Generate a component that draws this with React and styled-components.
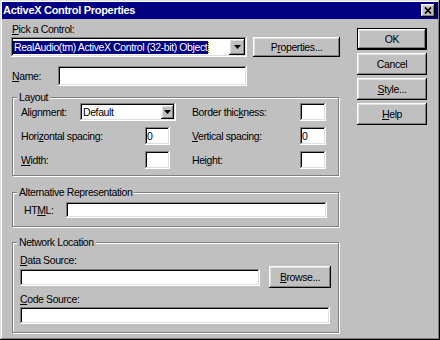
import React from 'react';
import styled, { createGlobalStyle } from 'styled-components';

const GlobalStyle = createGlobalStyle`
  html, body { margin: 0; padding: 0; background: #c0c0c0; }
  body { font-family: "Liberation Sans", Arial, sans-serif; }
  * { box-sizing: border-box; }
`;

const raised = `box-shadow: inset -1px -1px #000, inset 1px 1px #fff, inset -2px -2px #808080, inset 2px 2px #dfdfdf;`;
const sunken = `box-shadow: inset -1px -1px #fff, inset 1px 1px #808080, inset -2px -2px #dfdfdf, inset 2px 2px #000;`;

const Window = styled.div`
  width: 440px;
  height: 340px;
  padding: 2px;
  background: #c0c0c0;
  box-shadow: inset -1px -1px #000, inset 1px 1px #dfdfdf, inset -2px -2px #808080, inset 2px 2px #fff;
  display: flex;
  flex-direction: column;
  font-size: 10.5px;
  letter-spacing: -0.4px;
  color: #000;
`;

const TitleBar = styled.div`
  height: 17px;
  background: #000080;
  color: #fff;
  display: flex;
  align-items: center;
  justify-content: space-between;
  padding: 0 3px 0 1px;
`;

const Title = styled.span`
  font-weight: bold;
  font-size: 11px;
  letter-spacing: -0.3px;
  line-height: 17px;
  white-space: nowrap;
`;

const CloseButton = styled.button`
  width: 14px;
  height: 13px;
  padding: 0;
  border: 0;
  background: #c0c0c0;
  ${raised}
  display: flex;
  align-items: center;
  justify-content: center;
`;

const Body = styled.div`
  flex: 1;
  display: flex;
  gap: 17px;
  padding-left: 9px;
`;

const Main = styled.div`
  width: 329px;
  display: flex;
  flex-direction: column;
  padding-top: 4px;
`;

const Side = styled.div`
  width: 70px;
  display: flex;
  flex-direction: column;
  gap: 3px;
  padding-top: 9px;
`;

const Label = styled.div`
  line-height: ${p => p.$lh || 13}px;
  padding-left: ${p => p.$indent ?? 1}px;
  margin-top: ${p => p.$mt || 0}px;
  white-space: nowrap;
`;

const Row = styled.div`
  display: flex;
  align-items: center;
  justify-content: ${p => p.$spread ? 'space-between' : 'flex-start'};
  height: ${p => p.$h}px;
  margin-top: ${p => p.$mt || 0}px;
`;

const FieldLabel = styled.span`
  width: ${p => p.$w}px;
  flex: none;
  white-space: nowrap;
  padding-left: ${p => p.$indent || 0}px;
`;

const Field = styled.div`
  display: flex;
  align-items: center;
  width: ${p => (p.$w ? `${p.$w}px` : 'auto')};
  flex: none;
`;

const TextBox = styled.input`
  width: ${p => p.$w}px;
  height: ${p => p.$h}px;
  margin: ${p => p.$mt || 0}px 0 0 0;
  border: 0;
  outline: none;
  padding: 0 2px;
  background: #fff;
  ${sunken}
  font: inherit;
  letter-spacing: inherit;
  color: #000;
  display: block;
`;

const Combo = styled.div`
  width: ${p => p.$w}px;
  height: ${p => p.$h}px;
  background: #fff;
  ${sunken}
  padding: 2px;
  display: flex;
  align-items: center;
`;

const ComboValue = styled.div`
  flex: 1;
  display: flex;
  align-items: center;
  padding-left: ${p => (p.$selected ? 0 : 1)}px;
  white-space: nowrap;
  overflow: hidden;
`;

const Selected = styled.span`
  background: #000080;
  color: #fff;
  line-height: 13px;
  padding: 0 1px;
  outline: 1px dotted #808000;
`;

const DropButton = styled.div`
  width: ${p => p.$w}px;
  align-self: stretch;
  flex: none;
  background: #c0c0c0;
  ${raised}
  display: flex;
  align-items: center;
  justify-content: center;
`;

const Button = styled.button`
  width: ${p => p.$w}px;
  height: ${p => p.$h || 22}px;
  padding: 0;
  border: ${p => (p.$default ? '1px solid #000' : '0')};
  background: #c0c0c0;
  ${raised}
  font: inherit;
  letter-spacing: inherit;
  color: #000;
  flex: none;
`;

const Group = styled.div`
  position: relative;
  width: 327px;
  margin: ${p => p.$mt}px 0 0 1px;
  border: 1px solid #808080;
  box-shadow: inset 1px 1px #fff, 1px 1px #fff;
  padding: ${p => p.$pad};
  display: flex;
  flex-direction: column;
  gap: ${p => p.$gap || 0}px;
`;

const Legend = styled.span`
  position: absolute;
  top: -7px;
  left: 4px;
  padding: 0 2px;
  background: #c0c0c0;
  line-height: 12px;
  white-space: nowrap;
`;

const Key = styled.u`
  text-decoration: underline;
  text-underline-offset: 1px;
`;

const Arrow = () => (
  <svg width="7" height="4" viewBox="0 0 7 4">
    <polygon points="0,0 7,0 3.5,4" fill="#000" />
  </svg>
);

const CloseIcon = () => (
  <svg width="8" height="7" viewBox="0 0 8 7">
    <path d="M1 0.5 L7 6.5 M7 0.5 L1 6.5" stroke="#000" strokeWidth="1.7" fill="none" />
  </svg>
);

export default function App() {
  return (
    <>
      <GlobalStyle />
      <Window>
        <TitleBar>
          <Title>ActiveX Control Properties</Title>
          <CloseButton aria-label="Close"><CloseIcon /></CloseButton>
        </TitleBar>
        <Body>
          <Main>
            <Label><Key>P</Key>ick a Control:</Label>
            <Row $h={20} $mt={1} $spread>
              <Combo $w={236} $h={20}>
                <ComboValue $selected>
                  <Selected>RealAudio(tm) ActiveX Control (32-bit) Object</Selected>
                </ComboValue>
                <DropButton $w={16}><Arrow /></DropButton>
              </Combo>
              <Button $w={87} $h={20}>P<Key>r</Key>operties...</Button>
            </Row>
            <Row $h={20} $mt={9}>
              <FieldLabel $w={47} $indent={1}><Key>N</Key>ame:</FieldLabel>
              <TextBox $w={189} $h={20} readOnly />
            </Row>

            <Group $mt={11} $pad="5px 0 6px 8px" $gap={6}>
              <Legend>Layout</Legend>
              <Row $h={18}>
                <Field $w={171}>
                  <FieldLabel $w={59}>Alignment:</FieldLabel>
                  <Combo $w={96} $h={18}>
                    <ComboValue>Default</ComboValue>
                    <DropButton $w={13}><Arrow /></DropButton>
                  </Combo>
                </Field>
                <Field>
                  <FieldLabel $w={108}>Border thic<Key>k</Key>ness:</FieldLabel>
                  <TextBox $w={26} $h={18} readOnly />
                </Field>
              </Row>
              <Row $h={18}>
                <Field $w={171}>
                  <FieldLabel $w={124}>Hori<Key>z</Key>ontal spacing:</FieldLabel>
                  <TextBox $w={25} $h={18} readOnly defaultValue="0" />
                </Field>
                <Field>
                  <FieldLabel $w={108}><Key>V</Key>ertical spacing:</FieldLabel>
                  <TextBox $w={26} $h={18} readOnly defaultValue="0" />
                </Field>
              </Row>
              <Row $h={18}>
                <Field $w={171}>
                  <FieldLabel $w={124}><Key>W</Key>idth:</FieldLabel>
                  <TextBox $w={25} $h={18} readOnly />
                </Field>
                <Field>
                  <FieldLabel $w={108}>Hei<Key>g</Key>ht:</FieldLabel>
                  <TextBox $w={26} $h={18} readOnly />
                </Field>
              </Row>
            </Group>

            <Group $mt={16} $pad="9px 0 8px 11px">
              <Legend>Alternative Representation</Legend>
              <Row $h={16}>
                <FieldLabel $w={42}>HT<Key>M</Key>L:</FieldLabel>
                <TextBox $w={261} $h={16} readOnly />
              </Row>
            </Group>

            <Group $mt={15} $pad="11px 7px 8px 7px">
              <Legend>Network Location</Legend>
              <Label $lh={12} $indent={0}><Key>D</Key>ata Source:</Label>
              <Row $h={22} $spread>
                <TextBox $w={240} $h={17} readOnly />
                <Button $w={62} $h={22}><Key>B</Key>rowse...</Button>
              </Row>
              <Label $lh={12} $indent={0} $mt={5}><Key>C</Key>ode Source:</Label>
              <TextBox $w={310} $h={17} $mt={2} readOnly />
            </Group>
          </Main>
          <Side>
            <Button $w={70} $default>OK</Button>
            <Button $w={70}>Cancel</Button>
            <Button $w={70}><Key>S</Key>tyle...</Button>
            <Button $w={70}><Key>H</Key>elp</Button>
          </Side>
        </Body>
      </Window>
    </>
  );
}
